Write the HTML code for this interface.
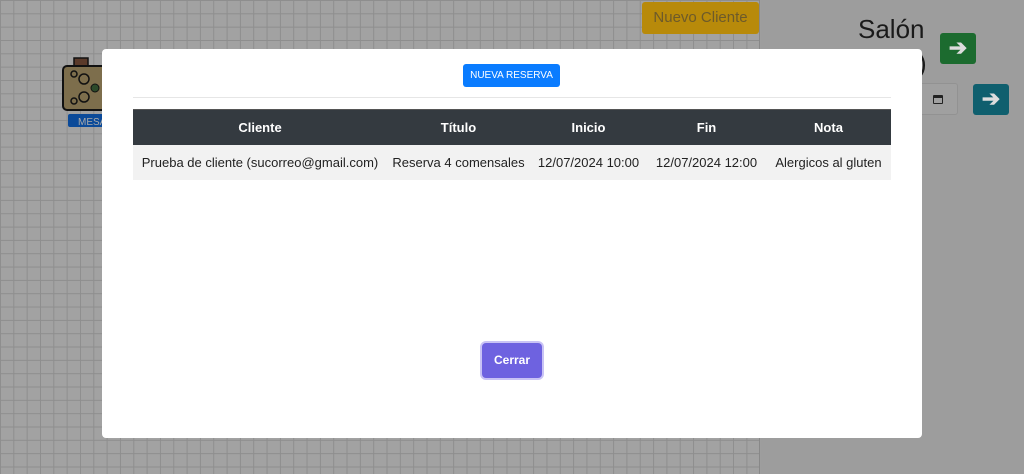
<!DOCTYPE html>
<html><head><meta charset="utf-8"><style>
*{box-sizing:border-box;margin:0;padding:0}
body{width:1024px;height:474px;overflow:hidden;position:relative;font-family:"Segoe UI","Liberation Sans",sans-serif;background:#9e9e9e}
.grid{position:absolute;left:0;top:0;width:760px;height:474px;background-color:#a2a2a2;background-image:linear-gradient(#8e8e8e 1px,transparent 1px),linear-gradient(90deg,#8e8e8e 1px,transparent 1px);background-size:13.33px 13.33px;background-position:0 0;border-right:1px solid #888}
.right{position:absolute;left:761px;top:0;width:263px;height:474px;background:#9d9d9d}
.nc{position:absolute;left:642px;top:2px;width:117px;height:32px;background:#b88a0a;color:#6d5a2a;font-size:15px;line-height:32px;text-align:center;border-radius:3px}
.salon{position:absolute;left:858px;top:14px;font-size:26px;color:#1a1a1a}
.par{position:absolute;left:918px;top:48px;font-size:26px;color:#1a1a1a}
.g{position:absolute;left:940px;top:33px;width:36px;height:31px;background:#1c6b2f;border-radius:3px;color:#ddd;font-size:22px;text-align:center;line-height:30px;font-weight:bold}
.b{position:absolute;left:973px;top:84px;width:36px;height:31px;background:#0f5f6e;border-radius:3px;color:#ddd;font-size:22px;text-align:center;line-height:30px;font-weight:bold}
.date{position:absolute;left:900px;top:83px;width:58px;height:32px;background:#a0a0a0;border:1px solid #929292;border-radius:3px}
.date i{position:absolute;left:32px;top:11px;width:10px;height:9px;border:1.5px solid #222;border-top-width:3px;border-radius:1px}
.mesa{position:absolute;left:62px;top:57px}
.modal{position:absolute;left:102px;top:49px;width:820px;height:389px;background:#fff;border-radius:4px}
.nr{position:absolute;left:361px;top:15px;width:97px;height:23px;background:#0a7cff;color:#fff;font-size:10px;line-height:23px;text-align:center;border-radius:3px}
.hr{position:absolute;left:31px;top:48px;width:758px;height:1px;background:#e6e6e6}
table{position:absolute;left:31px;top:60px;width:758px;border-collapse:collapse;font-size:13px}
th{background:#343a40;color:#fff;height:35px;font-weight:bold;border-top:1px solid #555}
td{background:#f2f2f2;color:#222;height:35px;text-align:center}
.cerrar{position:absolute;left:380px;top:294px;width:60px;height:35px;background:#6e62e0;color:#fff;font-size:12px;font-weight:bold;line-height:35px;text-align:center;border-radius:4px;box-shadow:0 0 0 2px #c9c3f5}
</style></head><body>
<div class="grid"></div>
<div class="right"></div>
<div class="nc">Nuevo Cliente</div>
<div class="salon">Salón</div>
<div class="par">)</div>
<div class="g">➔</div>
<div class="date"><i></i></div>
<div class="b">➔</div>
<svg class="mesa" width="60" height="70" viewBox="0 0 60 70">
<rect x="12" y="1" width="14" height="8" fill="#5a3a2a" stroke="#111" stroke-width="1.5"/>
<rect x="12" y="62" width="14" height="6" fill="#5a3a2a"/>
<rect x="1" y="9" width="50" height="44" rx="4" fill="#7d6e4c" stroke="#111" stroke-width="2"/>
<circle cx="12" cy="17" r="3" fill="none" stroke="#111" stroke-width="1.5"/>
<circle cx="22" cy="22" r="5" fill="none" stroke="#111" stroke-width="1.5"/>
<circle cx="22" cy="40" r="5" fill="none" stroke="#111" stroke-width="1.5"/>
<circle cx="12" cy="44" r="3" fill="none" stroke="#111" stroke-width="1.5"/>
<circle cx="33" cy="31" r="4" fill="#2c4a2a" stroke="#111"/>
<rect x="6" y="57" width="46" height="13" rx="2" fill="#0b4a99"/>
<text x="16" y="68" font-size="10" fill="#aaa" font-family="Liberation Sans">MESA</text>
</svg>
<div class="modal">
<div class="nr">NUEVA RESERVA</div>
<div class="hr"></div>
<table>
<tr><th style="width:254px">Cliente</th><th style="width:143px">Título</th><th style="width:117px">Inicio</th><th style="width:119px">Fin</th><th>Nota</th></tr>
<tr><td>Prueba de cliente (sucorreo@gmail.com)</td><td>Reserva 4 comensales</td><td>12/07/2024 10:00</td><td>12/07/2024 12:00</td><td>Alergicos al gluten</td></tr>
</table>
<div class="cerrar">Cerrar</div>
</div>
</body></html>
